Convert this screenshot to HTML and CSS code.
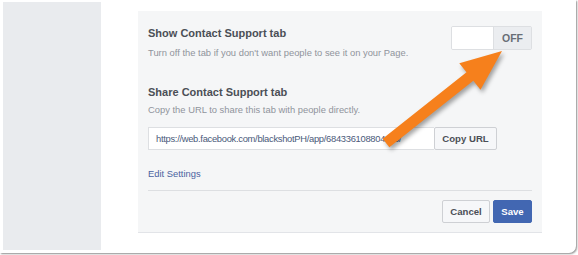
FILE: index.html
```html
<!DOCTYPE html>
<html>
<head>
<meta charset="utf-8">
<link rel="stylesheet" href="styles.css">
</head>
<body>
<div class="frame">
  <div class="sidebar"></div>
  <div class="main">
    <div class="panel">
      <div class="row-top">
        <div class="info">
          <div class="title">Show Contact Support tab</div>
          <div class="desc desc-first">Turn off the tab if you don't want people to see it on your Page.</div>
        </div>
        <div class="toggle">
          <span class="toggle-blank"></span>
          <span class="toggle-off">OFF</span>
        </div>
      </div>
      <div class="title title-share">Share Contact Support tab</div>
      <div class="desc desc-share">Copy the URL to share this tab with people directly.</div>
      <div class="url-row">
        <div class="url-input">https://web.facebook.com/blackshotPH/app/684336108804110/</div>
        <button class="btn btn-copy">Copy URL</button>
      </div>
      <a class="edit-link">Edit Settings</a>
      <div class="divider"></div>
      <div class="actions">
        <button class="btn btn-cancel">Cancel</button>
        <button class="btn btn-save">Save</button>
      </div>
    </div>
  </div>
  <svg class="arrow" width="578" height="255" viewBox="0 0 578 255">
    <polygon points="502,51 480.5,89.8 473.3,80.8 389.4,147.3 382.6,138.7 466.5,72.2 459.3,63.2" fill="#f6801c"/>
  </svg>
</div>
</body>
</html>
```
FILE: styles.css
```css
* { box-sizing: border-box; }
html, body { margin: 0; padding: 0; background: #ffffff; }
body {
  font-family: "Liberation Sans", Arial, Helvetica, sans-serif;
  width: 578px;
  height: 255px;
  overflow: hidden;
}
.frame {
  position: relative;
  width: 576px;
  height: 253px;
  background: #ffffff;
  border-bottom-right-radius: 7px;
  box-shadow: 1px 1px 2px rgba(0,0,0,0.45);
  display: flex;
  align-items: flex-start;
}
.sidebar {
  margin: 2px 0 0 3px;
  width: 98px;
  height: 248px;
  background: #e9ebee;
}
.main {
  flex: 1;
  padding: 11px 0 0 37px;
}
.panel {
  width: 404px;
  height: 222px;
  background: #f5f6f7;
  border-bottom: 1px solid #e2e4e8;
  padding: 14px 10px 0 10px;
}
.row-top {
  display: flex;
  justify-content: space-between;
  align-items: flex-start;
}
.title {
  font-size: 11px;
  line-height: 16px;
  font-weight: bold;
  color: #4b4f56;
}
.desc {
  font-size: 9.4px;
  line-height: 16px;
  color: #90949c;
}
.desc-first { margin-top: 4px; }
.toggle {
  margin-top: 1px;
  display: flex;
  height: 24px;
  border: 1px solid #dddfe2;
  border-radius: 2px;
  overflow: hidden;
}
.toggle-blank {
  width: 42px;
  background: #ffffff;
  border-right: 1px solid #dddfe2;
}
.toggle-off {
  width: 37px;
  background: #ebedf0;
  color: #686d76;
  font-size: 10.5px;
  font-weight: bold;
  display: flex;
  align-items: center;
  justify-content: center;
}
.title-share { margin-top: 23px; }
.desc-share { margin-top: 2px; }
.url-row {
  margin-top: 9px;
  display: flex;
  height: 23px;
}
.url-input {
  width: 286px;
  background: #ffffff;
  border: 1px solid #dddfe2;
  border-right: none;
  font-size: 9.4px;
  letter-spacing: -0.3px;
  color: #4b5a7a;
  padding: 0 7px;
  display: flex;
  align-items: center;
  white-space: nowrap;
  overflow: hidden;
}
.btn {
  font-family: "Liberation Sans", Arial, Helvetica, sans-serif;
  font-size: 9.6px;
  font-weight: bold;
  border-radius: 2px;
  padding: 0;
  margin: 0;
}
.btn-copy {
  width: 63px;
  height: 23px;
  background: #f6f7f9;
  border: 1px solid #ced0d4;
  color: #4b4f56;
}
.edit-link {
  display: block;
  margin-top: 16px;
  font-size: 9.4px;
  line-height: 16px;
  color: #4a62a0;
}
.divider {
  margin-top: 8px;
  height: 1px;
  background: #dddfe2;
}
.actions {
  margin-top: 9px;
  display: flex;
  justify-content: flex-end;
  gap: 3px;
}
.btn-cancel {
  width: 48px;
  height: 23px;
  background: #f6f7f9;
  border: 1px solid #ced0d4;
  color: #4b4f56;
}
.btn-save {
  width: 39px;
  height: 23px;
  background: #4267b2;
  border: 1px solid #4267b2;
  color: #ffffff;
}
.arrow {
  position: absolute;
  left: 0;
  top: 0;
  pointer-events: none;
  filter: drop-shadow(2px 3px 2px rgba(0,0,0,0.35));
}
```
